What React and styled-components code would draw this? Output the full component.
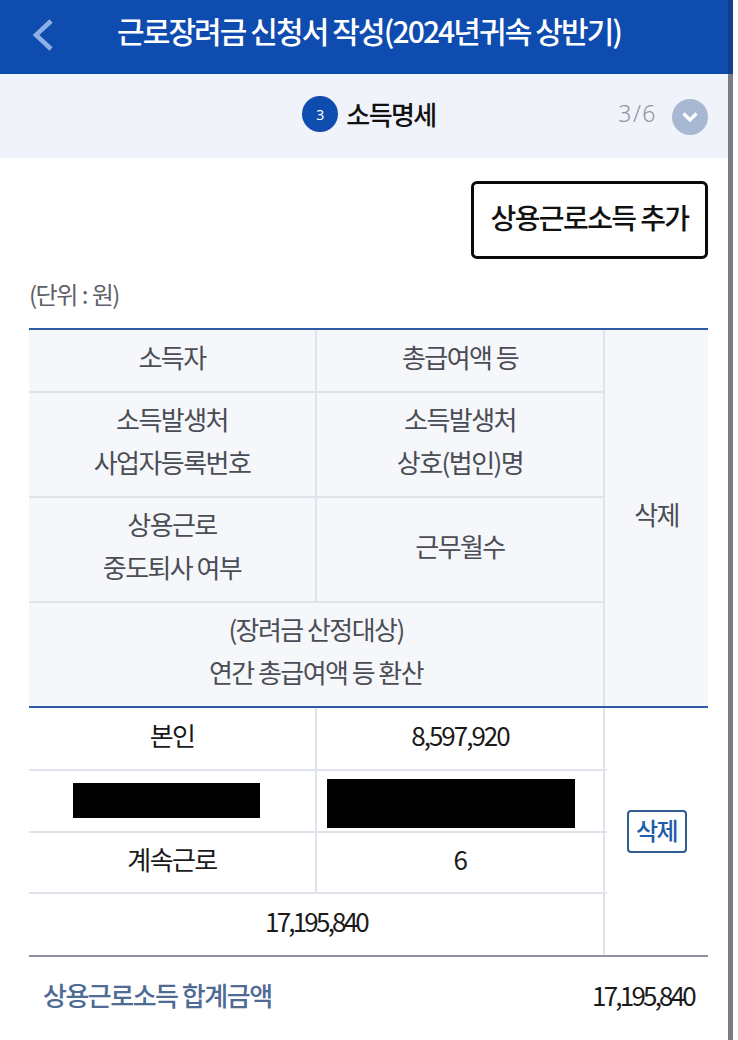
import React from "react";
import styled, { createGlobalStyle } from "styled-components";

const Global = createGlobalStyle`
  html, body { margin: 0; padding: 0; background: #fff; }
  body { font-family: "Noto Sans CJK KR", "Noto Sans", sans-serif; color: #111; overflow: hidden; }
  * { box-sizing: border-box; }
`;
const Page = styled.div`
  width: 738px; height: 1040px; display: flex; background: #fff; overflow: hidden;
`;
const Main = styled.div` width: 728px; flex: none; display: flex; flex-direction: column; `;
const Scrollbar = styled.div` width: 5px; flex: none; background: linear-gradient(#12408f 0 74px, #7b7c86 74px); `;
const Header = styled.header`
  flex: none; height: 74px; background: #0f4cb0; display: flex; align-items: center; position: relative; padding: 0 0 14px 117px;
`;
const Back = styled.svg` position: absolute; left: 30px; top: 18px; `;
const Title = styled.h1`
  margin: 0; color: #fff; font-size: 30px; font-weight: 500; letter-spacing: -1.9px; white-space: nowrap; line-height: 40px;
`;
const StepBar = styled.div`
  flex: none; height: 84px; background: #f1f3fa; display: flex; align-items: center; justify-content: center; position: relative; padding: 0 0 4px 10px;
`;
const StepNum = styled.span`
  width: 36px; height: 36px; border-radius: 50%; background: #0f4cb0; color: #fff; font-size: 14px; display: flex;
  align-items: center; justify-content: center; margin-right: 8px; font-family: "Noto Sans", sans-serif;
`;
const StepName = styled.span` font-size: 26px; font-weight: 500; letter-spacing: -1.6px; color: #111; line-height: 36px; `;
const Pager = styled.div` position: absolute; right: 20px; top: 23px; display: flex; align-items: center; gap: 15px; `;
const PageText = styled.span` font-size: 23px; color: #8d93a3; letter-spacing: 1.5px; font-family: "Noto Sans", sans-serif; font-weight: 300; line-height: 32px; margin-bottom: 8px; `;
const Toggle = styled.span`
  width: 36px; height: 36px; border-radius: 50%; background: #a9b8d2; display: flex; align-items: center; justify-content: center;
`;
const Content = styled.div` flex: none; padding: 23px 20px 0 29px; display: flex; flex-direction: column; `;
const ButtonRow = styled.div` display: flex; justify-content: flex-end; `;
const AddButton = styled.button`
  width: 237px; height: 78px; border: 3px solid #0a0a0a; border-radius: 6px; background: #fff; color: #111; font: 500 28px "Noto Sans CJK KR", sans-serif;
  letter-spacing: -1.6px; padding: 0 0 7px;
`;
const Unit = styled.div` margin-top: 18px; height: 36px; font-size: 24px; line-height: 34px; letter-spacing: -1.5px; word-spacing: 1px; color: #5f6168; `;
const Table = styled.div` margin-top: 15px; display: grid; grid-template-columns: 288px 288px 1fr; `;
const Head = styled.div`
  grid-column: ${p => p.$span || "auto"};
  grid-row: ${p => p.$rows || "auto"};
  height: ${p => (p.$h ? p.$h + "px" : "auto")};
  background: #f5f7fb; color: #4b4d55; font-size: 26px; line-height: 43px; letter-spacing: -1.56px; text-align: center;
  display: flex; flex-direction: column; justify-content: center;
  padding-bottom: 9px;
  border-bottom: ${p => (p.$last ? "0" : "2px solid #dfe3ec")};
  border-right: ${p => (p.$right ? "2px solid #dfe3ec" : "0")};
`;
const Rule = styled.div`
  grid-column: 1 / -1; height: 2px; background: ${p => p.$c};
`;
const Cell = styled.div`
  grid-column: ${p => p.$span || "auto"};
  height: ${p => p.$h}px; background: #fff; color: #1a1a1a; font-size: 26px; letter-spacing: ${p => p.$ls || -1.56}px; text-align: center;
  display: flex; align-items: center; justify-content: center; padding-bottom: 9px; position: relative;
  border-bottom: ${p => (p.$last ? "0" : "2px solid #dfe3ec")};
  border-right: ${p => (p.$right ? "2px solid #dfe3ec" : "0")};
  ${p => p.$tick && `&::after { content: ""; position: absolute; right: -4px; bottom: -2px; width: 4px; height: 2px; background: #dfe3ec; }`}
`;
const DeleteCell = styled.div`
  grid-column: 3; grid-row: ${p => p.$rows}; display: flex; align-items: center; justify-content: center; background: #fff; padding-bottom: 0;
`;
const DeleteButton = styled.button`
  width: 60px; height: 43px; border: 2px solid #2f5d92; border-radius: 4px; background: #fff; color: #1d5ca8; font: 500 24px "Noto Sans CJK KR", sans-serif;
  letter-spacing: -1.5px; padding: 0 0 4px;
`;
const Redact = styled.div`
  background: #000; width: ${p => p.$w}px; height: ${p => p.$h}px; margin: ${p => p.$mt}px auto 0 ${p => p.$ml}px;
`;
const RedactCell = styled(Cell)` justify-content: flex-start; padding-bottom: 0; `;
const Sum = styled.div`
  height: 83px; display: flex; align-items: center; justify-content: space-between; padding: 0 14px 8px 14px;
`;
const SumLabel = styled.span` font-size: 26px; font-weight: 500; letter-spacing: -1.5px; color: #4f6b93; `;
const SumValue = styled.span` font-size: 26px; letter-spacing: -2.8px; color: #1a1a1a; `;

export default function App() {
  return (
    <Page>
      <Global />
      <Main>
        <Header>
          <Back width="24" height="34" viewBox="0 0 24 34" fill="none">
            <path d="M21 3 L6 17 L21 31" stroke="#8fb0e4" strokeWidth="4.5" />
          </Back>
          <Title>근로장려금 신청서 작성(2024년귀속 상반기)</Title>
        </Header>
        <StepBar>
          <StepNum>3</StepNum>
          <StepName>소득명세</StepName>
          <Pager>
            <PageText>3/6</PageText>
            <Toggle>
              <svg width="18" height="12" viewBox="0 0 18 12" fill="none">
                <path d="M2.5 2.5 L9 9 L15.5 2.5" stroke="#fff" strokeWidth="3.2" />
              </svg>
            </Toggle>
          </Pager>
        </StepBar>
        <Content>
          <ButtonRow><AddButton>상용근로소득 추가</AddButton></ButtonRow>
          <Unit>(단위 : 원)</Unit>
          <Table>
            <Rule $c="#2d5ba6" />
            <Head $h={63} $right>소득자</Head>
            <Head $h={63} $right>총급여액 등</Head>
            <Head $rows="span 4" $last>삭제</Head>
            <Head $h={105} $right><span>소득발생처</span><span>사업자등록번호</span></Head>
            <Head $h={105} $right><span>소득발생처</span><span>상호(법인)명</span></Head>
            <Head $h={105} $right><span>상용근로</span><span>중도퇴사 여부</span></Head>
            <Head $h={105} $right>근무월수</Head>
            <Head $span="span 2" $h={103} $last $right><span>(장려금 산정대상)</span><span>연간 총급여액 등 환산</span></Head>
            <Rule $c="#2d5ba6" />
            <Cell $h={63} $right>본인</Cell>
            <Cell $h={63} $right $tick $ls={-2}>8,597,920</Cell>
            <DeleteCell $rows="span 4"><DeleteButton>삭제</DeleteButton></DeleteCell>
            <RedactCell $h={62} $right><Redact $ml={44} $mt={-1} $w={187} $h={35} /></RedactCell>
            <RedactCell $h={62} $right $tick><Redact $ml={10} $mt={4} $w={248} $h={49} /></RedactCell>
            <Cell $h={61} $right>계속근로</Cell>
            <Cell $h={61} $right $tick>6</Cell>
            <Cell $span="span 2" $h={61} $last $right $ls={-2.8}>17,195,840</Cell>
            <Rule $c="#8e929b" />
          </Table>
          <Sum>
            <SumLabel>상용근로소득 합계금액</SumLabel>
            <SumValue>17,195,840</SumValue>
          </Sum>
        </Content>
      </Main>
      <Scrollbar />
    </Page>
  );
}
